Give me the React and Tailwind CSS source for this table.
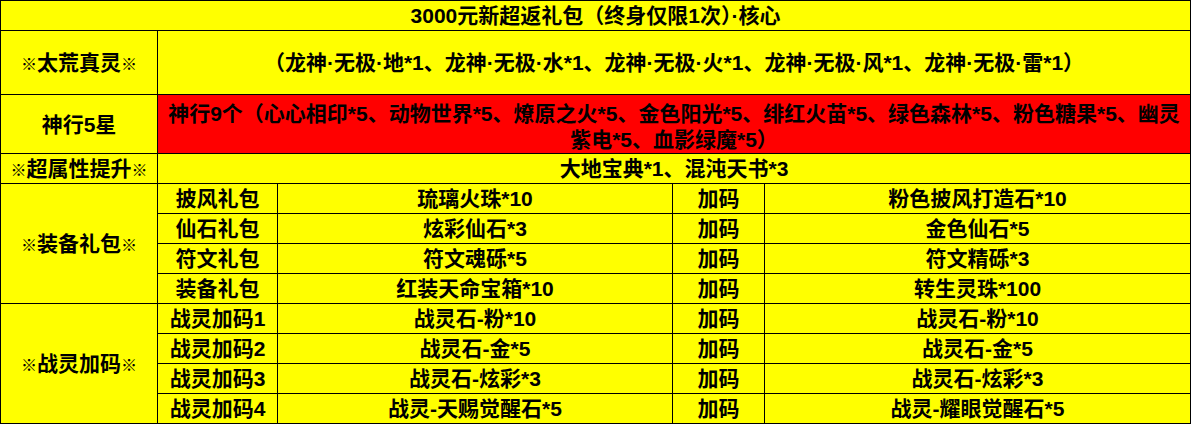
import clsx from "clsx";

const gear = [
  ["披风礼包", "琉璃火珠*10", "加码", "粉色披风打造石*10"],
  ["仙石礼包", "炫彩仙石*3", "加码", "金色仙石*5"],
  ["符文礼包", "符文魂砾*5", "加码", "符文精砾*3"],
  ["装备礼包", "红装天命宝箱*10", "加码", "转生灵珠*100"],
];

const spirit = [
  ["战灵加码1", "战灵石-粉*10", "加码", "战灵石-粉*10"],
  ["战灵加码2", "战灵石-金*5", "加码", "战灵石-金*5"],
  ["战灵加码3", "战灵石-炫彩*3", "加码", "战灵石-炫彩*3"],
  ["战灵加码4", "战灵-天赐觉醒石*5", "加码", "战灵-耀眼觉醒石*5"],
];

function Cell({ className, children }) {
  return (
    <div className={clsx("flex items-center justify-center text-center whitespace-nowrap bg-[#ffff00]", className)}>
      {children}
    </div>
  );
}

// the reference mark is drawn narrow in the source sheet
const Mark = () => <span className="text-[16px] font-black font-['Noto_Sans_CJK_SC',sans-serif]">※</span>;

function Label({ className, text }) {
  return (
    <Cell className={className}>
      <Mark />
      {text}
      <Mark />
    </Cell>
  );
}

export default function App() {
  return (
    <div className="bg-white min-h-[425px] w-[1192px]">
      <div className="grid w-[1191px] grid-cols-[156px_119px_394px_91px_425px] grid-rows-[29px_63px_58px_29px_repeat(8,29px)] gap-px bg-black p-px text-[21px] leading-none text-black font-['Liberation_Sans','Noto_Sans_CJK_SC',sans-serif] font-semibold">
        <Cell className="col-span-5 bg-[#92d050]">3000元新超返礼包（终身仅限1次）·核心</Cell>

        <Label text="太荒真灵" />
        <Cell className="col-span-4">
          （龙神·无极·地*1、龙神·无极·水*1、龙神·无极·火*1、龙神·无极·风*1、龙神·无极·雷*1）
        </Cell>

        <Cell>神行5星</Cell>
        <div className="col-span-4 flex flex-col items-center justify-end bg-[#ff0000] text-center leading-[26px]">
          <span className="whitespace-nowrap">神行9个（心心相印*5、动物世界*5、燎原之火*5、金色阳光*5、绯红火苗*5、绿色森林*5、粉色糖果*5、幽灵</span>
          <span className="whitespace-nowrap">紫电*5、血影绿魔*5）</span>
        </div>

        <Label text="超属性提升" />
        <Cell className="col-span-4">大地宝典*1、混沌天书*3</Cell>

        <Label className="row-span-4" text="装备礼包" />
        {gear.map((row) => row.map((text, i) => <Cell key={row[0] + i}>{text}</Cell>))}

        <Label className="row-span-4" text="战灵加码" />
        {spirit.map((row) => row.map((text, i) => <Cell key={row[0] + i}>{text}</Cell>))}
      </div>
    </div>
  );
}
